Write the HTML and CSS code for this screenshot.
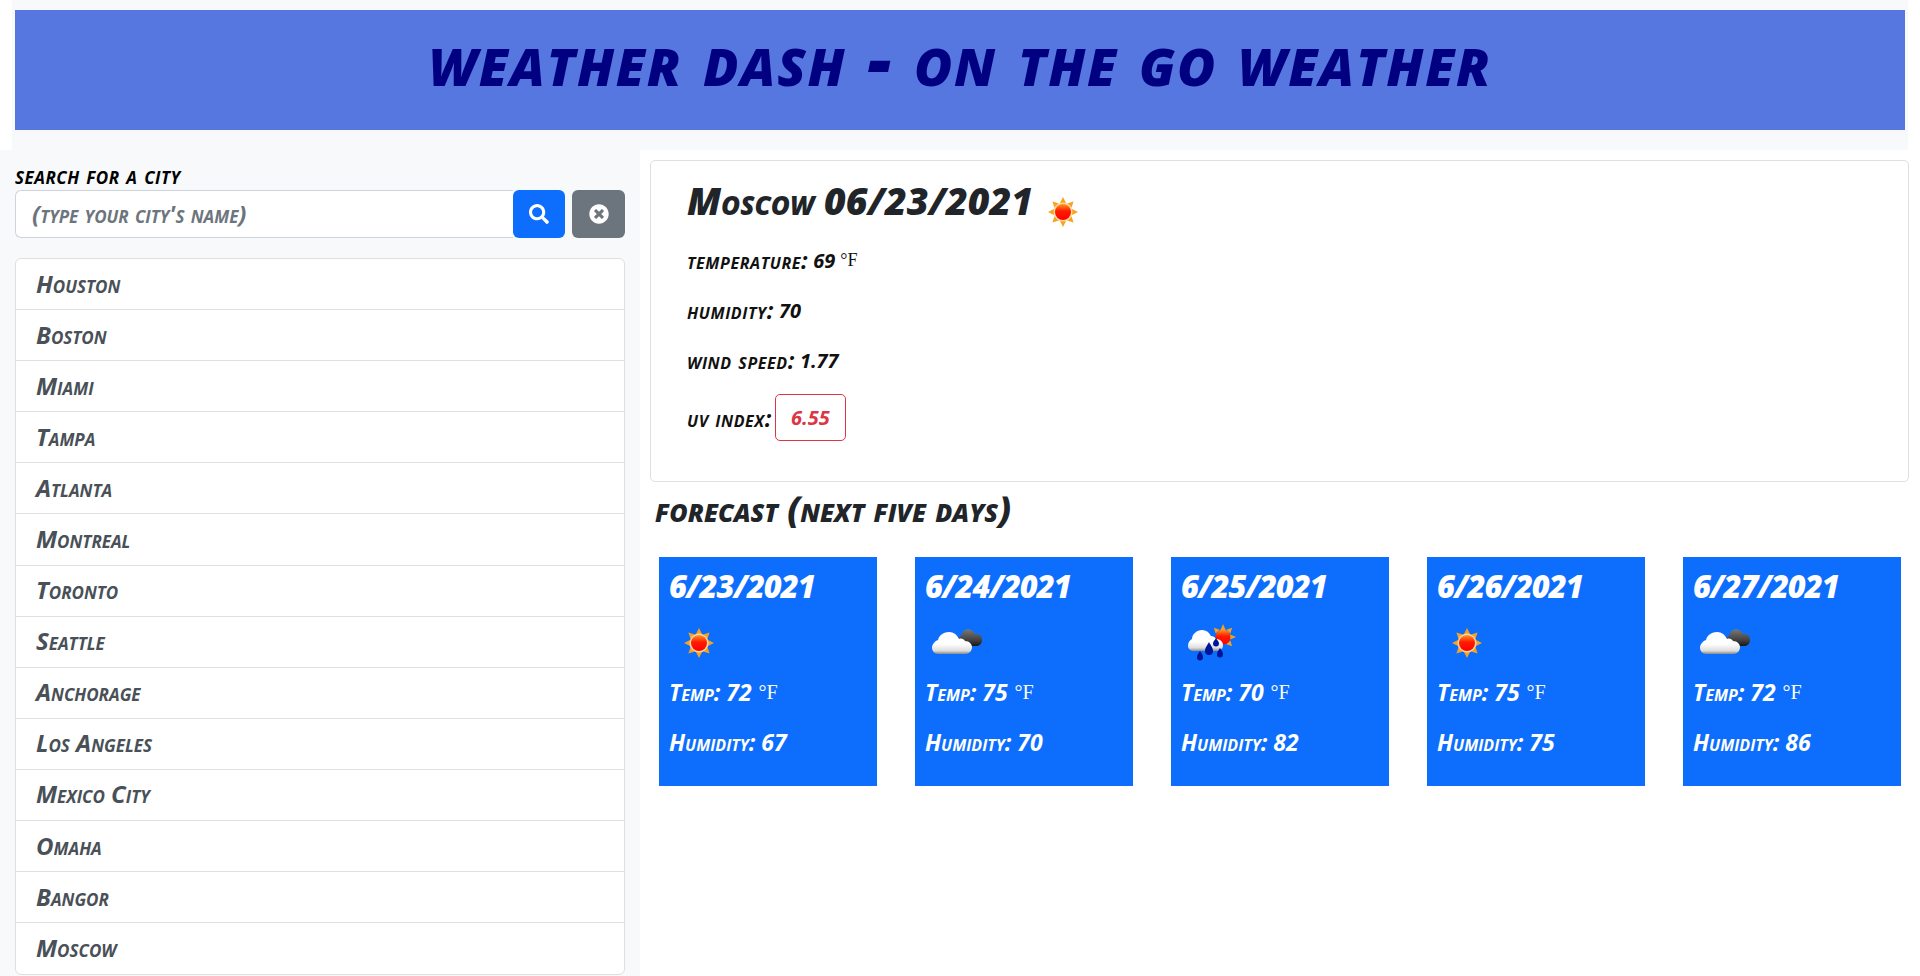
FILE: index.html
```html
<!DOCTYPE html>
<html lang="en">
<head>
<meta charset="utf-8">
<title>Weather Dash</title>
<link rel="stylesheet" href="styles.css">
</head>
<body>
<svg class="defs" width="0" height="0" aria-hidden="true">
  <defs>
    <linearGradient id="sunBody" x1="0" y1="0" x2="0" y2="1"><stop offset="0" stop-color="#ff9a20"/><stop offset="0.45" stop-color="#ff1a00"/><stop offset="1" stop-color="#ff0000"/></linearGradient>
    <linearGradient id="white" x1="0" y1="0" x2="0" y2="1"><stop offset="0.55" stop-color="#ffffff"/><stop offset="0.85" stop-color="#dddddd"/><stop offset="1" stop-color="#8a8a8a"/></linearGradient>
    <linearGradient id="dark" x1="0" y1="0" x2="0" y2="1"><stop offset="0" stop-color="#777777"/><stop offset="0.7" stop-color="#3c3c3c"/><stop offset="1" stop-color="#161616"/></linearGradient>
    <symbol id="sun" viewBox="0 0 60 60">
      <g fill="#f7a21d">
        <path d="M30 15l3 6h-6z"/><path d="M30 45l3-6h-6z"/><path d="M15 30l6-3v6z"/><path d="M45 30l-6-3v6z"/>
        <path d="M19.4 19.4l6.400 2.100-4.300 4.300z"/><path d="M40.600 19.400l-6.400 2.100 4.300 4.300z"/>
        <path d="M19.400 40.600l6.400-2.100-4.300-4.300z"/><path d="M40.600 40.600l-6.400-2.100 4.300-4.300z"/>
      </g>
      <circle cx="30" cy="30" r="9.500" fill="#ffd9a0"/>
      <circle cx="30" cy="30" r="8" fill="url(#sunBody)"/>
    </symbol>
    <symbol id="clouds" viewBox="0 0 60 60">
      <path fill="url(#dark)" d="M32 29c0-3 2-5 4-6 1-5 6-8 10-6 2 1 3 2 4 4 4-1 7 2 7 6s-3 6-6 6H36c-2 0-4-2-4-4z"/>
      <path fill="url(#white)" d="M7 35c0-4 3-7 6-8 1-5 6-8 11-8 5 0 8 3 10 7 2-1 5 0 6 2 4 0 7 3 7 6 0 4-3 7-6 7H13c-3 0-6-3-6-6z"/>
    </symbol>
    <symbol id="rain" viewBox="0 0 60 60">
      <g fill="#f7a21d">
        <path d="M42 11l2.500 6h-5z"/><path d="M55 24l-6-2.500v5z"/><path d="M51.200 14.800l-5.800 1.900 3.900 3.900z"/><path d="M51.200 33.200l-5.800-1.900 3.900-3.900z"/><path d="M32.800 14.800l5.800 1.900-3.900 3.900z"/>
      </g>
      <circle cx="42" cy="24" r="7.500" fill="url(#sunBody)"/>
      <path fill="url(#white)" d="M7 33c0-4 2-6 4-7 0-5 5-9 10-9 4 0 7 2 9 6 2 0 4 1 5 3 3 0 7 2 7 6 0 4-3 6-6 6H13c-3 0-6-2-6-5z"/>
      <path fill="#00149a" d="M19 38c2 3 3 4 3 6.500a3 3 0 0 1-6 0c0-2.500 1-3.500 3-6.500z"/>
      <path fill="#00149a" d="M28 29c2 4 4 5.500 4 9a4 4 0 0 1-8 0c0-3.500 2-5 4-9z"/>
      <path fill="#00149a" d="M35 25c1 2 3 3.500 3 5.500a3 3 0 0 1-6 0c0-2 2-3.500 3-5.500z"/>
      <path fill="#00149a" d="M39 35c2 3 3 4 3 6.500a3 3 0 0 1-6 0c0-2.500 1-3.500 3-6.500z"/>
    </symbol>
  </defs>
</svg>
<div class="top">
  <header class="banner"><h1 class="banner-title">weather dash - on the go weather</h1></header>
</div>
<div class="layout">
  <aside class="sidebar">
    <label class="search-label" for="city">search for a city</label>
    <div class="search-row">
      <input class="search-input" id="city" type="text" placeholder="(type your city's name)">
      <button class="btn btn-search" type="button" aria-label="Search">
        <svg class="fa" viewBox="0 0 512 512"><path fill="currentColor" d="M505 442.7L405.3 343c-4.5-4.5-10.6-7-17-7H372c27.6-35.3 44-79.7 44-128C416 93.1 322.9 0 208 0S0 93.1 0 208s93.1 208 208 208c48.3 0 92.7-16.4 128-44v16.3c0 6.4 2.5 12.5 7 17l99.7 99.7c9.4 9.4 24.6 9.4 33.9 0l28.3-28.3c9.4-9.4 9.4-24.6.1-34zM208 336c-70.7 0-128-57.2-128-128 0-70.7 57.2-128 128-128 70.7 0 128 57.2 128 128 0 70.7-57.2 128-128 128z"/></svg>
      </button>
      <button class="btn btn-clear" type="button" aria-label="Clear">
        <svg class="fa" viewBox="0 0 512 512"><path fill="currentColor" d="M256 8C119 8 8 119 8 256s111 248 248 248 248-111 248-248S393 8 256 8zm121.6 313.1c4.7 4.7 4.7 12.3 0 17L338 377.6c-4.7 4.7-12.3 4.7-17 0L256 312l-65.1 65.6c-4.7 4.7-12.3 4.7-17 0L134.4 338c-4.7-4.7-4.7-12.3 0-17l65.6-65-65.6-65.1c-4.7-4.7-4.7-12.3 0-17l39.6-39.6c4.7-4.7 12.3-4.7 17 0l65 65.7 65.1-65.6c4.7-4.7 12.3-4.7 17 0l39.6 39.6c4.7 4.7 4.7 12.3 0 17L312 256l65.6 65.1z"/></svg>
      </button>
    </div>
    <ul class="city-list">
      <li class="city">Houston</li>
      <li class="city">Boston</li>
      <li class="city">Miami</li>
      <li class="city">Tampa</li>
      <li class="city">Atlanta</li>
      <li class="city">Montreal</li>
      <li class="city">Toronto</li>
      <li class="city">Seattle</li>
      <li class="city">Anchorage</li>
      <li class="city">Los Angeles</li>
      <li class="city">Mexico City</li>
      <li class="city">Omaha</li>
      <li class="city">Bangor</li>
      <li class="city">Moscow</li>
    </ul>
  </aside>
  <main class="main">
    <section class="today">
      <h2 class="today-title"><span>Moscow 06/23/2021</span><svg class="wicon today-icon"><use href="#sun"/></svg></h2>
      <p class="stat">temperature: <span class="val">69</span> <span class="unit">°F</span></p>
      <p class="stat">humidity: <span class="val">70</span></p>
      <p class="stat">wind speed: <span class="val">1.77</span></p>
      <p class="stat stat-uv">uv index: <span class="uv">6.55</span></p>
    </section>
    <h3 class="forecast-title">forecast (next five days)</h3>
    <div class="forecast">
      <article class="day">
        <h4 class="day-date">6/23/2021</h4>
        <svg class="wicon"><use href="#sun"/></svg>
        <p class="day-stat">Temp: 72 <span class="unit">°F</span></p>
        <p class="day-stat">Humidity: 67</p>
      </article>
      <article class="day">
        <h4 class="day-date">6/24/2021</h4>
        <svg class="wicon"><use href="#clouds"/></svg>
        <p class="day-stat">Temp: 75 <span class="unit">°F</span></p>
        <p class="day-stat">Humidity: 70</p>
      </article>
      <article class="day">
        <h4 class="day-date">6/25/2021</h4>
        <svg class="wicon"><use href="#rain"/></svg>
        <p class="day-stat">Temp: 70 <span class="unit">°F</span></p>
        <p class="day-stat">Humidity: 82</p>
      </article>
      <article class="day">
        <h4 class="day-date">6/26/2021</h4>
        <svg class="wicon"><use href="#sun"/></svg>
        <p class="day-stat">Temp: 75 <span class="unit">°F</span></p>
        <p class="day-stat">Humidity: 75</p>
      </article>
      <article class="day">
        <h4 class="day-date">6/27/2021</h4>
        <svg class="wicon"><use href="#clouds"/></svg>
        <p class="day-stat">Temp: 72 <span class="unit">°F</span></p>
        <p class="day-stat">Humidity: 86</p>
      </article>
    </div>
  </main>
</div>
</body>
</html>
```
FILE: styles.css
```css
* { box-sizing: border-box; }
html, body { margin: 0; height: 976px; overflow: hidden; background: #fff; }
body {
  font-family: "Open Sans", "Liberation Sans", sans-serif;
  font-style: italic;
  font-weight: 700;
  font-variant: small-caps;
  color: #212529;
}
.defs { position: absolute; }
.top { margin: 0 12px; padding: 10px 3px 20px; background: #f8f9fa; height: 150px; }
.banner { height: 120px; padding-bottom: 24px; background: #5677e0; display: flex; align-items: center; justify-content: center; }
.banner-title { margin: 0; color: #000080; font-size: 74px; font-weight: 800; line-height: 1; letter-spacing: 1.7px; }
.layout { display: flex; height: 826px; }
.sidebar { width: 640px; background: #f8f9fa; padding: 13px 15px 0; }
.search-label { display: block; height: 27px; font-size: 24px; line-height: 24px; letter-spacing: .5px; color: #000; }
.search-row { display: flex; height: 48px; }
.search-input {
  flex: 1; min-width: 0; height: 48px; padding: 0 16px 2px;
  border: 1px solid #ced4da; border-right: 0; border-radius: 6px 0 0 6px;
  font: inherit; font-size: 24px; color: #6c757d; background: #fff;
}
.search-input::placeholder { color: #6c757d; opacity: 1; }
.btn { border: 0; height: 48px; padding: 0; color: #fff; display: flex; align-items: center; justify-content: center; border-radius: 6px; }
.btn-search { width: 52px; background: #0d6efd; }
.btn-clear { width: 53px; margin-left: 7px; background: #6c757d; }
.fa { width: 20px; height: 20px; }
.city-list { list-style: none; margin: 20px 0 0; padding: 0; background: #fff; border: 1px solid #dfdfdf; border-radius: 6px; }
.city { height: 51.1px; padding: 0 20px 2px; display: flex; align-items: center; font-size: 24px; color: #495057; border-bottom: 1px solid #dfdfdf; }
.city:last-child { border-bottom: 0; }
.main { flex: 1; min-width: 0; padding: 10px 11px 0 10px; background: #fff; }
.today { height: 322px; border: 1px solid #dfdfdf; border-radius: 5px; padding: 16px 36px 0; }
.today-title { margin: 0; height: 58px; display: flex; align-items: flex-start; font-size: 37.5px; font-weight: 800; line-height: 48px; }
.wicon { display: block; width: 60px; height: 60px; flex: none; }
.today-icon { margin: 5px 0 0 0; }
.stat { margin: 0; height: 50px; display: flex; align-items: center; gap: 5px; font-size: 23px; letter-spacing: .6px; color: #111; }
.val { font-size: 20px; letter-spacing: 0; }
.stat-uv { height: 59px; margin-top: 3px; gap: 3px; }
.unit { font-family: "Liberation Serif", serif; font-size: 18px; letter-spacing: 0; font-style: normal; font-weight: 400; font-variant: normal; }
.uv { width: 71px; height: 47px; display: flex; align-items: center; justify-content: center; border: 1px solid #dc3545; border-radius: 5px; color: #dc3545; font-size: 20px; letter-spacing: 0; }
.forecast-title { margin: 7px 0 0 5px; font-size: 35px; line-height: 40px; font-weight: 800; }
.forecast { display: flex; gap: 38px; margin: 28px 0 0 9px; }
.day { flex: none; width: 218px; height: 229px; padding: 10px; background: #0d6efd; color: #fff; }
.day-date { margin: 0; font-size: 31px; line-height: 38px; font-weight: 800; letter-spacing: -1px; }
.day .wicon { margin: 8px 0 -6px; }
.day-stat { margin: 0; height: 50px; display: flex; align-items: center; gap: 7px; font-size: 23px; }
.day-stat .unit { font-size: 20px; }
```
